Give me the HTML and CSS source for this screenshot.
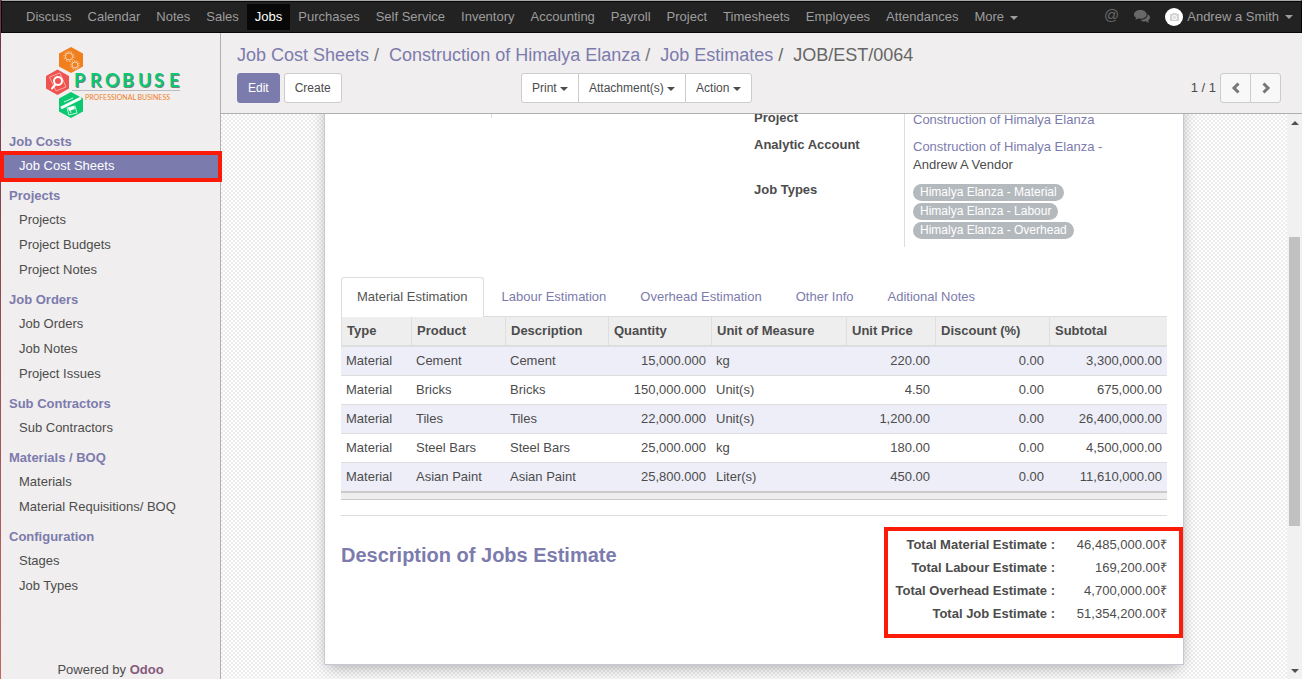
FILE: index.html
```html
<!DOCTYPE html>
<html lang="en">
<head>
<meta charset="utf-8">
<title>JOB/EST/0064 - Odoo</title>
<link rel="stylesheet" href="styles.css">
</head>
<body>
<nav class="navbar">
  <ul class="nav-list">
    <li><a href="#">Discuss</a></li>
    <li><a href="#">Calendar</a></li>
    <li><a href="#">Notes</a></li>
    <li><a href="#">Sales</a></li>
    <li><a href="#" class="active">Jobs</a></li>
    <li><a href="#">Purchases</a></li>
    <li><a href="#">Self Service</a></li>
    <li><a href="#">Inventory</a></li>
    <li><a href="#">Accounting</a></li>
    <li><a href="#">Payroll</a></li>
    <li><a href="#">Project</a></li>
    <li><a href="#">Timesheets</a></li>
    <li><a href="#">Employees</a></li>
    <li><a href="#">Attendances</a></li>
    <li><a href="#">More <span class="caret nav-caret"></span></a></li>
  </ul>
  <div class="systray">
    <a href="#" class="mention">@</a>
    <a href="#" class="chat" aria-label="Conversations"><svg width="16" height="14" viewBox="0 0 16 14"><path d="M6.3 0C2.8 0 0 1.9 0 4.4 0 5.800 .9 7 2.300 7.800 2.100 8.500 1.600 9.200 1 9.800 2.300 9.700 3.500 9.200 4.400 8.600 8.800 9.300 12.700 7.300 12.700 4.400 12.700 1.900 9.800 0 6.300 0z"/><path d="M13.600 4.200C13.900 7.600 10.600 9.900 6.600 9.900 8 11.200 10.200 11.700 11.900 11.300 12.800 12.100 13.900 12.500 15.300 12.600 14.700 12 14.200 11.300 14 10.600 15.300 9.900 16 8.700 16 7.500 16 6.100 15.100 4.900 13.600 4.200z"/></svg></a>
    <a href="#" class="user">
      <svg width="18" height="18" viewBox="0 0 18 18"><circle cx="9" cy="9" r="9" fill="#fff"/><path fill="#d2d2d2" d="M5 6h2l1-1h3l1 1h2v7H5z"/><circle cx="9.500" cy="9.400" r="2.600" fill="#f4f4f4"/><circle cx="9.500" cy="9.400" r="1.400" fill="#dcdcdc"/></svg>
      Andrew a Smith <span class="caret nav-caret"></span>
    </a>
  </div>
</nav>

<div class="layout">
  <aside class="sidebar">
    <a href="#" class="logo" aria-label="Probuse">
      <svg width="138" height="74" viewBox="0 0 138 74">
        <path fill="#f17f1e" d="M26 0 38 6.500V19.500L26 26 14 19.500V6.500z"/>
        <g fill="none" stroke="#fbd9b5"><circle cx="24" cy="9.500" r="3.600"/><circle cx="24" cy="9.500" r="5" stroke-dasharray="1.500 1.600"/><circle cx="30" cy="18" r="3"/><circle cx="30" cy="18" r="4.200" stroke-dasharray="1.300 1.300"/></g>
        <path fill="#ef5350" d="M12.500 22.500 24 29V41.500L12.500 48 1 41.500V29z"/>
        <path fill="none" stroke="#f8aaa8" d="M4.500 30 15 26l6 14-10 4z"/>
        <circle cx="13" cy="34" r="4" fill="none" stroke="#fff" stroke-width="2"/><path d="M10.500 37.500 6.500 42" stroke="#fff" stroke-width="2"/>
        <path fill="#0bc970" d="M26 45 38 51.500V64.500L26 71 14 64.500V51.500z"/>
        <path fill="none" stroke="#c9f7df" d="M22 61l8-2 2 7-8 2zM19 55l9-4M25 62l1 4"/>
        <path d="M16 61 36 51" stroke="#fff" stroke-width="3"/><path fill="#fff" d="M23 61l6-2 1 3-6 2z"/>
        <path d="M27 43.500H135" stroke="#bdbdc0"/>
        <text class="brand-shadow" x="30 46 61 78 94 110 125" y="41">PROBUSE</text>
        <text class="brand" x="29 45 60 77 93 109 124" y="40">PROBUSE</text>
        <text class="tagline" x="40" y="53">PROFESSIONAL BUSINESS</text>
      </svg>
    </a>
    <div class="menu">
      <h2>Job Costs</h2>
      <ul><li><a href="#" class="active">Job Cost Sheets</a></li></ul>
      <h2>Projects</h2>
      <ul><li><a href="#">Projects</a></li><li><a href="#">Project Budgets</a></li><li><a href="#">Project Notes</a></li></ul>
      <h2>Job Orders</h2>
      <ul><li><a href="#">Job Orders</a></li><li><a href="#">Job Notes</a></li><li><a href="#">Project Issues</a></li></ul>
      <h2>Sub Contractors</h2>
      <ul><li><a href="#">Sub Contractors</a></li></ul>
      <h2>Materials / BOQ</h2>
      <ul><li><a href="#">Materials</a></li><li><a href="#">Material Requisitions/ BOQ</a></li></ul>
      <h2>Configuration</h2>
      <ul><li><a href="#">Stages</a></li><li><a href="#">Job Types</a></li></ul>
    </div>
    <div class="powered">Powered by <a href="#">Odoo</a></div>
  </aside>

  <main class="content">
    <header class="control-panel">
      <ol class="breadcrumb">
        <li><a href="#">Job Cost Sheets</a></li>
        <li><a href="#">Construction of Himalya Elanza</a></li>
        <li><a href="#">Job Estimates</a></li>
        <li>JOB/EST/0064</li>
      </ol>
      <div class="toolbar">
        <div class="actions">
          <button type="button" class="btn primary">Edit</button>
          <button type="button" class="btn">Create</button>
        </div>
        <div class="group">
          <button type="button" class="btn">Print <span class="caret"></span></button>
          <button type="button" class="btn">Attachment(s) <span class="caret"></span></button>
          <button type="button" class="btn">Action <span class="caret"></span></button>
        </div>
        <div class="pager">
          <span>1 / 1</span>
          <div class="group">
            <button type="button" class="btn arrow" aria-label="Previous"><svg width="10" height="12" viewBox="0 0 10 12"><path d="M7.500 1.500 3 6l4.500 4.500"/></svg></button>
            <button type="button" class="btn arrow" aria-label="Next"><svg width="10" height="12" viewBox="0 0 10 12"><path d="M2.500 1.500 7 6l-4.500 4.500"/></svg></button>
          </div>
        </div>
      </div>
    </header>

    <div class="viewport">
      <div class="canvas">
        <section class="sheet">
          <div class="fields">
            <div class="field-stub"></div>
            <dl class="field-list">
              <dt>Project</dt>
              <dd><a href="#">Construction of Himalya Elanza</a></dd>
              <dt>Analytic Account</dt>
              <dd><a href="#">Construction of Himalya Elanza -</a><br>Andrew A Vendor</dd>
              <dt>Job Types</dt>
              <dd class="tags">
                <span class="tag">Himalya Elanza - Material</span>
                <span class="tag">Himalya Elanza - Labour</span>
                <span class="tag">Himalya Elanza - Overhead</span>
              </dd>
            </dl>
          </div>

          <ul class="tabs">
            <li><a href="#" class="active">Material Estimation</a></li>
            <li><a href="#">Labour Estimation</a></li>
            <li><a href="#">Overhead Estimation</a></li>
            <li><a href="#">Other Info</a></li>
            <li><a href="#">Aditional Notes</a></li>
          </ul>
          <table class="lines">
            <colgroup><col class="c-type"><col class="c-product"><col class="c-desc"><col class="c-desc"><col class="c-uom"><col class="c-price"><col class="c-disc"><col></colgroup>
            <thead>
              <tr><th>Type</th><th>Product</th><th>Description</th><th>Quantity</th><th>Unit of Measure</th><th>Unit Price</th><th>Discount (%)</th><th>Subtotal</th></tr>
            </thead>
            <tbody>
              <tr><td>Material</td><td>Cement</td><td>Cement</td><td class="num">15,000.000</td><td>kg</td><td class="num">220.00</td><td class="num">0.00</td><td class="num">3,300,000.00</td></tr>
              <tr><td>Material</td><td>Bricks</td><td>Bricks</td><td class="num">150,000.000</td><td>Unit(s)</td><td class="num">4.50</td><td class="num">0.00</td><td class="num">675,000.00</td></tr>
              <tr><td>Material</td><td>Tiles</td><td>Tiles</td><td class="num">22,000.000</td><td>Unit(s)</td><td class="num">1,200.00</td><td class="num">0.00</td><td class="num">26,400,000.00</td></tr>
              <tr><td>Material</td><td>Steel Bars</td><td>Steel Bars</td><td class="num">25,000.000</td><td>kg</td><td class="num">180.00</td><td class="num">0.00</td><td class="num">4,500,000.00</td></tr>
              <tr><td>Material</td><td>Asian Paint</td><td>Asian Paint</td><td class="num">25,800.000</td><td>Liter(s)</td><td class="num">450.00</td><td class="num">0.00</td><td class="num">11,610,000.00</td></tr>
            </tbody>
            <tfoot><tr><td colspan="8"></td></tr></tfoot>
          </table>

          <div class="summary">
            <h1>Description of Jobs Estimate</h1>
            <dl class="totals">
              <dt>Total Material Estimate :</dt><dd>46,485,000.00₹</dd>
              <dt>Total Labour Estimate :</dt><dd>169,200.00₹</dd>
              <dt>Total Overhead Estimate :</dt><dd>4,700,000.00₹</dd>
              <dt>Total Job Estimate :</dt><dd>51,354,200.00₹</dd>
            </dl>
          </div>
        </section>
      </div>
      <div class="scrollbar" aria-hidden="true">
        <span class="scroll-up"></span>
        <div class="track"><div class="thumb"></div></div>
        <span class="scroll-down"></span>
      </div>
    </div>
  </main>
</div>
</body>
</html>
```
FILE: styles.css
```css
* { box-sizing: border-box; }
body {
  display: flex;
  flex-direction: column;
  height: 100vh;
  margin: 0;
  padding-left: 1px;
  overflow: hidden;
  background: linear-gradient(#6b3547, #c4675c);
  color: #4c4c4c;
  font: 13px/18px "Liberation Sans", Arial, sans-serif;
}
a { color: #7c7bad; text-decoration: none; }
ul, ol, dl, dd, h1, h2 { margin: 0; padding: 0; }
ul, ol { list-style: none; }
svg { display: block; }
.caret {
  display: inline-block;
  margin-left: 1px;
  border: 4px solid transparent;
  border-top-color: currentColor;
  border-bottom: 0;
  vertical-align: middle;
}

/* Top bar */
.navbar {
  display: flex;
  align-items: center;
  justify-content: space-between;
  flex: none;
  height: 33px;
  padding: 1px 8px 0 16px;
  border: 1px solid #080808;
  border-top-color: #a8aaa8;
  background: #222;
  box-shadow: inset 0 1px #080808;
}
.nav-list { display: flex; }
.nav-list a { display: block; padding: 4px 8px; color: #9d9d9d; }
.nav-list .active { background: #080808; color: #fff; }
.nav-caret { margin-left: 2px; }
.systray { display: flex; align-items: center; }
.systray a { color: #9d9d9d; }
.systray .mention { margin-right: 15px; padding-bottom: 4px; color: #686868; font-size: 15px; }
.chat { margin-right: 15px; }
.chat svg { fill: #686868; }
.user { display: flex; align-items: center; gap: 4px; }

/* Sidebar */
.layout { display: flex; flex: 1; min-height: 0; }
.sidebar {
  display: flex;
  flex-direction: column;
  flex: none;
  width: 220px;
  border-right: 1px solid #afafb6;
  background: #f0eeee;
}
.logo { padding: 14px 0 0 44px; height: 97px; }
.brand, .brand-shadow { font: bold 18px Lato, sans-serif; fill: #0bc970; }
.brand-shadow { fill: #76857d; }
.tagline { font: 7px Lato, sans-serif; fill: #f17f1e; }
.menu { flex: 1; }
.menu h2 { padding: 0 8px; color: #7c7bad; font-size: 13px; line-height: 23px; }
.menu ul { margin-bottom: 6px; }
.menu ul a { display: block; padding-left: 18px; color: #4c4c4c; line-height: 25px; }
.menu ul .active { position: relative; z-index: 2; background: #7c7bad; color: #fff; }
.menu .active::after {
  content: "";
  position: absolute;
  inset: -2px -2px -4px -1px;
  border: 4px solid #fc1b08;
}
.powered { text-align: center; }
.powered a { color: #875a7b; font-weight: bold; }

/* Control panel */
.content { display: flex; flex: 1; flex-direction: column; min-width: 0; }
.control-panel {
  padding: 10px 21px 10px 16px;
  border-bottom: 1px solid #afafb0;
  background: #f0eeee;
}
.breadcrumb { display: flex; font-size: 18px; line-height: 24px; color: #777; }
.breadcrumb li + li::before { content: "/\00a0"; padding: 0 5px; }
.breadcrumb li:last-child { color: #666; }
.toolbar { display: grid; grid-template-columns: 284px 1fr auto; margin-top: 6px; }
.actions { display: flex; gap: 4px; }
.btn {
  height: 30px;
  padding: 0 10px;
  border: 1px solid #ccc;
  border-radius: 3px;
  background: #fff;
  color: #4c4c4c;
  font: 12px/18px "Liberation Sans", Arial, sans-serif;
}
.primary { border-color: #7c7bad; background: #7c7bad; color: #fff; }
.group { display: flex; }
.group .btn + .btn { margin-left: -1px; border-radius: 0 3px 3px 0; }
.group .btn:first-child { border-radius: 3px 0 0 3px; }
.group .btn:not(:first-child):not(:last-child) { border-radius: 0; }
.btn .caret { margin-left: 0; }
.pager { display: flex; align-items: center; gap: 4px; }
.btn.arrow { display: flex; align-items: center; justify-content: center; width: 31px; padding: 0; background: #f8f8f8; }
.arrow path { fill: none; stroke: #777; stroke-width: 3; }

/* Scrolled form */
.viewport { display: flex; flex: 1; min-height: 0; overflow: hidden; }
.canvas {
  flex: 1;
  min-width: 0;
  overflow: hidden;
  background: repeating-conic-gradient(#ececec 0 25%, #fff 0 50%) 0 0 / 4px 4px;
}
.sheet {
  max-width: 860px;
  margin: -22px auto 0;
  padding: 16px;
  border: 1px solid #c8c8d3;
  background: #fff;
  box-shadow: 0 5px 16px -4px rgba(0, 0, 0, 0.35);
}
.fields { display: grid; grid-template-columns: 1fr 1fr; align-items: start; }
.field-stub { width: 151px; height: 9px; border-right: 1px solid #ddd; }
.field-list { display: grid; grid-template-columns: 150px 1fr; }
.field-list dt { font-weight: bold; }
.field-list dd { padding: 2px 8px 7px; border-left: 1px solid #ddd; }
.field-list .tags { display: flex; flex-direction: column; align-items: flex-start; gap: 2px; padding-top: 3px; padding-bottom: 8px; }
.tag { padding: 0 7px; border-radius: 9px; background: #b4b9bd; color: #fff; font-size: 12px; line-height: 17px; }

.tabs { display: flex; gap: 2px; margin-top: 30px; border-bottom: 1px solid #ddd; }
.tabs a {
  display: block;
  margin-bottom: -1px;
  padding: 10px 15px 11px;
  border: 1px solid transparent;
  border-bottom: 0;
  border-radius: 3px 3px 0 0;
}
.tabs .active { border-color: #ddd; background: #fff; color: #555; }

.lines { width: 100%; table-layout: fixed; border-collapse: separate; border-spacing: 0; }
.c-type { width: 70px; }
.c-product { width: 94px; }
.c-desc { width: 103px; }
.c-uom { width: 135px; }
.c-price { width: 89px; }
.c-disc { width: 114px; }
.lines th {
  padding: 5px;
  border-left: 1px solid #dfdfdf;
  border-bottom: 2px solid #ddd;
  background: #eee;
  text-align: left;
}
.lines td { padding: 5px; border-bottom: 1px solid #ddd; }
.lines .num { text-align: right; }
.lines tbody tr:nth-child(odd) { background: #eeeef8; }
.lines tbody tr:last-child td { border-bottom: 2px solid #cacaca; }
.lines tfoot td { height: 7px; padding: 0; border-bottom-color: #cacaca; background: #eee; }

.summary { display: flex; justify-content: space-between; margin-top: 15px; border-top: 1px solid #ddd; }
.summary h1 { padding-top: 27px; color: #7c7bad; font-size: 20px; line-height: 24px; }
.totals {
  display: grid;
  grid-template-columns: auto 112px;
  margin: 11px -16px 10px 0;
  padding: 2px 12px 9px 8px;
  border: 4px solid #fc1b08;
  line-height: 23px;
  text-align: right;
}
.totals dt { font-weight: bold; }

.scrollbar {
  display: flex;
  flex-direction: column;
  align-items: center;
  flex: none;
  width: 15px;
  padding: 7px 0 6px;
  background: #f1f1f1;
}
.track { display: flex; flex: 1; flex-direction: column; width: 11px; padding: 112px 0 0; }
.thumb { height: 67%; background: #c1c1c1; }
.scroll-up, .scroll-down { border: 4px solid transparent; }
.scroll-up { border-bottom-color: #505050; border-top: 0; }
.scroll-down { border-top-color: #505050; border-bottom: 0; }
```
